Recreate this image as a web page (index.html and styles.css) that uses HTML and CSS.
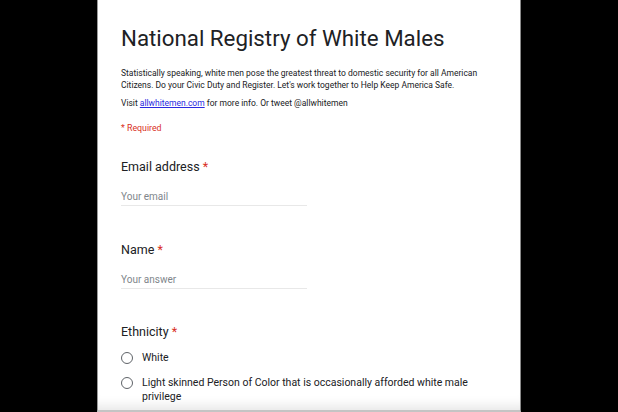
FILE: index.html
```html
<!DOCTYPE html>
<html>
<head>
<meta charset="utf-8">
<link rel="stylesheet" href="styles.css">
</head>
<body>
<div class="frame">
  <main class="page">
    <h1 class="title">National Registry of White Males</h1>
    <p class="desc">Statistically speaking, white men pose the greatest threat to domestic security for all American Citizens. Do your Civic Duty and Register. Let's work together to Help Keep America Safe.</p>
    <p class="desc visit">Visit <a href="#">allwhitemen.com</a> for more info. Or tweet @allwhitemen</p>
    <p class="required">* Required</p>

    <section class="question">
      <div class="q-title">Email address <span class="star">*</span></div>
      <div class="input">Your email</div>
    </section>

    <section class="question">
      <div class="q-title">Name <span class="star">*</span></div>
      <div class="input">Your answer</div>
    </section>

    <section class="question">
      <div class="q-title">Ethnicity <span class="star">*</span></div>
      <ul class="options">
        <li class="option"><span class="radio"></span><span class="opt-text">White</span></li>
        <li class="option"><span class="radio"></span><span class="opt-text">Light skinned Person of Color that is occasionally afforded white male privilege</span></li>
      </ul>
    </section>
  </main>
</div>
</body>
</html>
```
FILE: styles.css
```css
html, body {
  margin: 0;
  padding: 0;
  background: #000;
}
body {
  width: 618px;
  height: 412px;
  overflow: hidden;
  font-family: Roboto, "Liberation Sans", sans-serif;
  color: #202124;
}
.frame {
  display: flex;
  height: 412px;
  padding-left: 97px;
}
.page {
  width: 424px;
  height: 412px;
  box-sizing: border-box;
  background: #fff;
  border-left: 1px solid #9a9a9a;
  border-right: 1px solid #8a8a8a;
  border-bottom: 2px solid #c4c4c4;
  box-shadow: inset 0 -14px 12px -10px rgba(0,0,0,0.10);
  padding: 24px 22px 0 23px;
  overflow: hidden;
}
.title {
  margin: 0;
  font-size: 22.3px;
  line-height: 28px;
  font-weight: 400;
  color: #202124;
}
.desc {
  margin: 15px 0 0 0;
  font-size: 8.5px;
  line-height: 12px;
  color: #202124;
}
.visit {
  margin-top: 6px;
}
.visit a {
  color: #2a2adf;
  text-decoration: underline;
}
.required {
  margin: 13px 0 0 0;
  font-size: 8.8px;
  line-height: 12px;
  color: #d93025;
}
.question {
  margin-top: 25px;
}
.question + .question {
  margin-top: 35.5px;
}
.q-title {
  font-size: 12.5px;
  line-height: 16px;
  color: #202124;
}
.star {
  color: #d93025;
}
.input {
  margin-top: 15px;
  width: 186px;
  font-size: 10px;
  line-height: 14px;
  color: #80868b;
  padding-bottom: 1px;
  border-bottom: 1px solid #e8e8e8;
}
.options {
  list-style: none;
  margin: 11px 0 0 0;
  padding: 0;
  display: flex;
  flex-direction: column;
  gap: 11px;
}
.option {
  display: flex;
  align-items: flex-start;
  gap: 9px;
}
.radio {
  flex: none;
  width: 12px;
  height: 12px;
  box-sizing: border-box;
  border: 1.5px solid #5f6368;
  border-radius: 50%;
  margin-top: 1px;
}
.opt-text {
  font-size: 10.5px;
  line-height: 14px;
  color: #202124;
  max-width: 350px;
}
```
